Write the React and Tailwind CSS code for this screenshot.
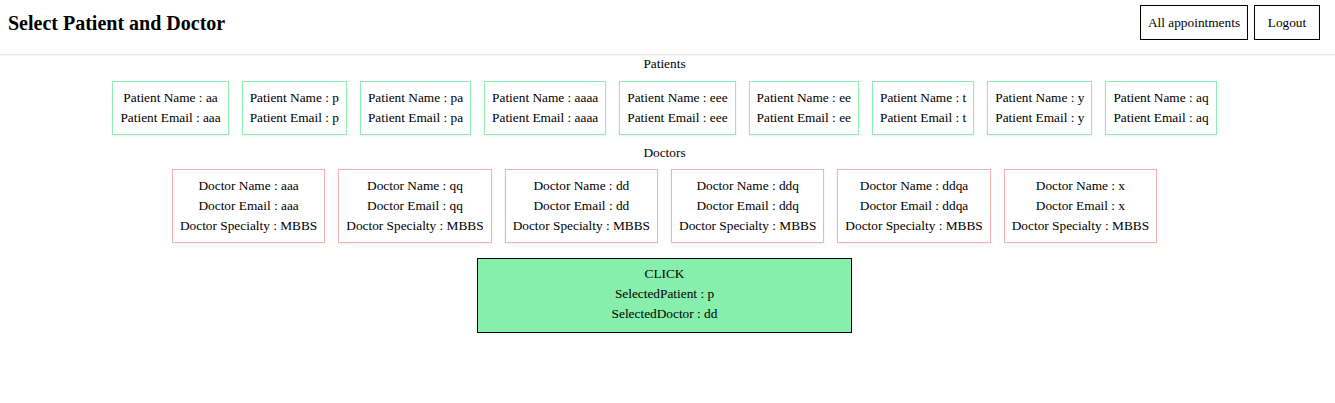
const patients = [
  { name: "aa", email: "aaa" },
  { name: "p", email: "p" },
  { name: "pa", email: "pa" },
  { name: "aaaa", email: "aaaa" },
  { name: "eee", email: "eee" },
  { name: "ee", email: "ee" },
  { name: "t", email: "t" },
  { name: "y", email: "y" },
  { name: "aq", email: "aq" },
];

const doctors = [
  { name: "aaa", email: "aaa", specialty: "MBBS" },
  { name: "qq", email: "qq", specialty: "MBBS" },
  { name: "dd", email: "dd", specialty: "MBBS" },
  { name: "ddq", email: "ddq", specialty: "MBBS" },
  { name: "ddqa", email: "ddqa", specialty: "MBBS" },
  { name: "x", email: "x", specialty: "MBBS" },
];

export default function App() {
  return (
    <div
      className="min-h-[403px] bg-white text-black"
      style={{ fontFamily: '"Liberation Serif", "Times New Roman", serif' }}
    >
      <header className="h-[55px] flex items-center justify-between pl-[8px] pr-[15px] border-b border-[#e6e6e6] shadow-[0_1px_1px_rgba(0,0,0,0.04)]">
        <h2 className="text-[20px] font-bold leading-none -mt-[8px]">
          Select Patient and Doctor
        </h2>
        <div className="flex gap-[6px] -mt-[9px]">
          <button className="w-[108px] h-[35px] border border-black text-[13.33px] bg-white">
            All appointments
          </button>
          <button className="w-[66px] h-[35px] border border-black text-[13.33px] bg-white">
            Logout
          </button>
        </div>
      </header>

      <main className="flex flex-col items-center pr-[6px] text-[13.33px] leading-[20px]">
        <p className="h-[20px] -mt-[1px]">Patients</p>

        <div className="flex gap-[13px] mt-[7px]">
          {patients.map((p) => (
            <div
              key={p.name}
              className="border border-[#8ceeb0] px-[7px] py-[6px] text-center shadow-[0_1px_2px_rgba(0,0,0,0.08)]"
            >
              <p>Patient Name : {p.name}</p>
              <p>Patient Email : {p.email}</p>
            </div>
          ))}
        </div>

        <p className="h-[20px] mt-[8px]">Doctors</p>

        <div className="flex gap-[13px] mt-[6px]">
          {doctors.map((d) => (
            <div
              key={d.name}
              className="border border-[#f2b2b2] px-[7px] py-[6px] text-center shadow-[0_1px_2px_rgba(0,0,0,0.08)]"
            >
              <p>Doctor Name : {d.name}</p>
              <p>Doctor Email : {d.email}</p>
              <p>Doctor Specialty : {d.specialty}</p>
            </div>
          ))}
        </div>

        <div className="mt-[15px] w-[375px] border border-black bg-[#86efac] pt-[5px] pb-[8px] text-center">
          <p>CLICK</p>
          <p>SelectedPatient : p</p>
          <p>SelectedDoctor : dd</p>
        </div>
      </main>
    </div>
  );
}
